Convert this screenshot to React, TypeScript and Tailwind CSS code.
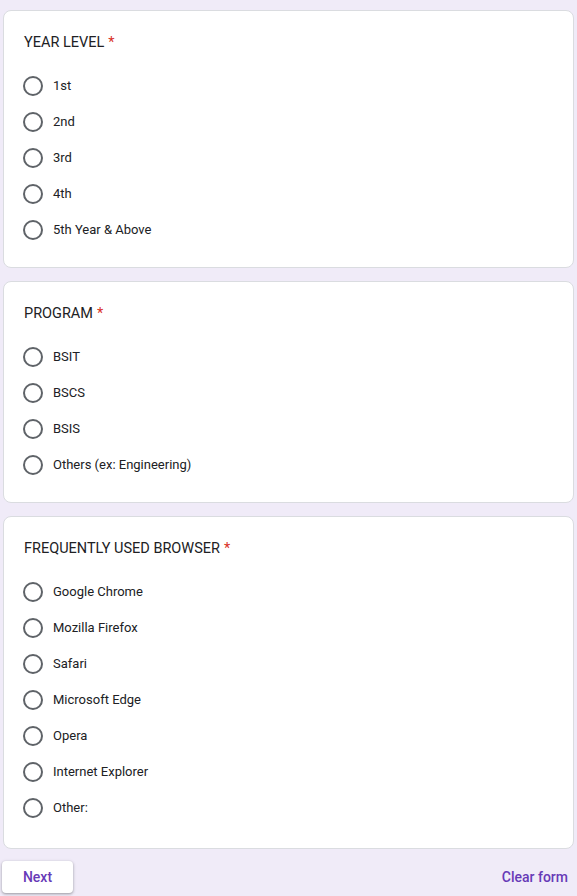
import React from "react";

const sections = [
  { title: "YEAR LEVEL", options: ["1st", "2nd", "3rd", "4th", "5th Year & Above"] },
  { title: "PROGRAM", options: ["BSIT", "BSCS", "BSIS", "Others (ex: Engineering)"] },
  {
    title: "FREQUENTLY USED BROWSER",
    options: ["Google Chrome", "Mozilla Firefox", "Safari", "Microsoft Edge", "Opera", "Internet Explorer", "Other:"],
  },
];

export default function App() {
  return (
    <div
      className="min-h-[896px] w-[577px] bg-[#f0ebf8] pt-[10px] px-[3px] text-[#202124]"
      style={{ fontFamily: "Roboto, Arial, sans-serif" }}
    >
      <div className="flex flex-col gap-[13px]">
        {sections.map((s, i) => (
          <div
            key={s.title}
            className={`rounded-[8px] border border-[#dadce0] bg-white pl-[19px] pr-[20px] pt-[20px] ${i === 2 ? "pb-[22px]" : "pb-[19px]"}`}
          >
            <div className="h-[24px] flex items-center pl-[1px] text-[14.5px] leading-[24px] text-[#202124]">
              {s.title}
              <span className="ml-[4px] text-[#d93025]">*</span>
            </div>
            <div className="mt-[13px] flex flex-col">
              {s.options.map((o) => (
                <div key={o} className="flex h-[36px] items-center">
                  <div className="h-[20px] w-[20px] rounded-full border-2 border-[#5f6368]" />
                  <span className="ml-[10px] text-[13px] text-[#202124]">{o}</span>
                </div>
              ))}
            </div>
          </div>
        ))}
      </div>
      <div className="mt-[12px] flex items-center justify-between pr-[6px]">
        <button className="-ml-[1px] h-[32px] w-[71px] rounded-[4px] bg-white text-[14px] font-medium text-[#673ab7] shadow-[0_1px_2px_rgba(60,64,67,0.3),0_1px_3px_1px_rgba(60,64,67,0.15)]">
          Next
        </button>
        <span className="text-[14px] font-medium text-[#673ab7]">Clear form</span>
      </div>
    </div>
  );
}
